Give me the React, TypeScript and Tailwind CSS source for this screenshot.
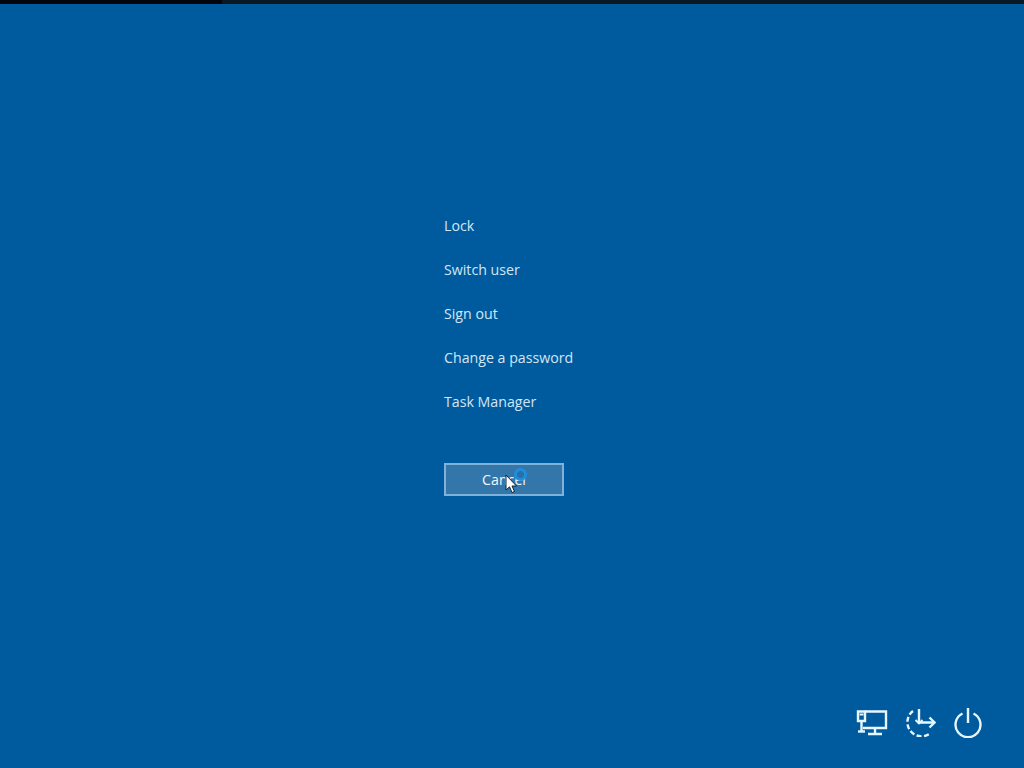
import React from 'react';

const items = ['Lock', 'Switch user', 'Sign out', 'Change a password', 'Task Manager'];

const NetworkIcon = () => (
  <svg width="32" height="28" viewBox="0 0 32 28" fill="none" stroke="#e6f6ff" strokeWidth="2.400">
    <path d="M9 2.500H30V19H7" />
    <path d="M19 19V25M12 25H26" />
    <path d="M2 2.500H9V12H2Z" fill="#005a9e" />
    <path d="M3.500 5.500H7.500" strokeWidth="2" />
    <path d="M5.500 12V22.500" />
    <path d="M2 22.500H9" />
  </svg>
);

const UpdateIcon = () => (
  <svg width="32" height="28" viewBox="0 0 32 28" fill="none" stroke="#e6f6ff" strokeWidth="2.400">
    <path d="M9 2A13 13 0 1 0 26 24.500" strokeDasharray="5 2.500" />
    <path d="M15 0V13.500H30" />
    <path d="M25.500 8.500L30.500 13.500L25.500 18.500" />
    <path d="M11.500 11L15 14.500L18.500 11" strokeWidth="1.800" />
  </svg>
);

const PowerIcon = () => (
  <svg width="30" height="30" viewBox="-2 0 30 30" fill="none" stroke="#e6f6ff" strokeWidth="2.400">
    <path d="M8.500 5.500A12.500 12.500 0 1 0 19.500 5.500" />
    <path d="M14 0V15" />
  </svg>
);

const Cursor = () => (
  <svg width="13" height="20" viewBox="0 0 13 20" className="absolute left-[59px] top-[9px]">
    <path d="M1 1V16L4.500 12.800L7 18.500L9.500 17.500L7 12H11.500Z" fill="#ffffff" stroke="#10243a" strokeWidth="1" />
  </svg>
);

export default function App() {
  return (
    <div className="w-[1024px] h-[768px] overflow-hidden flex flex-col bg-[#005a9e] font-['Open_Sans','Noto_Sans',sans-serif]">
      {/* strip left over from the previous screen */}
      <div className="flex h-[4px] shrink-0">
        <div className="w-[222px] bg-[#02060c]" />
        <div className="flex-1 bg-[#0a1826]" />
      </div>

      <div className="flex-1 flex flex-col pl-[444px] pt-[200px]">
        {items.map((label) => (
          <div key={label} className="h-[44px] flex items-center text-[14.200px] text-[#d2e7f6]">
            {label}
          </div>
        ))}

        <button className="relative mt-[39px] w-[120px] h-[33px] flex items-center justify-center border-2 border-[#7fb2d8] bg-[#3377aa] text-[14.200px] text-[#eef7fc]">
          Cancel
          <span className="absolute left-[68px] top-[3px] w-[13px] h-[13px] rounded-full border-[3px] border-[#1f8fdc] bg-[#2a6fa8]" />
          <Cursor />
        </button>
      </div>

      <div className="flex justify-end items-center gap-[16px] pr-[42px] pb-[30px]">
        <NetworkIcon />
        <UpdateIcon />
        <PowerIcon />
      </div>
    </div>
  );
}
